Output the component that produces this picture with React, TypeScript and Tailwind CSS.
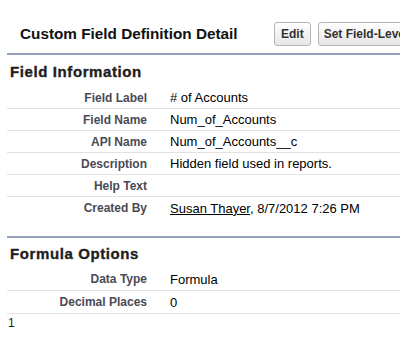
import React from "react";

const rows1: { label: string; value: React.ReactNode; last?: boolean }[] = [
  { label: "Field Label", value: "# of Accounts" },
  { label: "Field Name", value: "Num_of_Accounts" },
  { label: "API Name", value: "Num_of_Accounts__c" },
  { label: "Description", value: "Hidden field used in reports." },
  { label: "Help Text", value: "" },
  {
    label: "Created By",
    value: (
      <>
        <span className="underline">Susan Thayer</span>, 8/7/2012 7:26 PM
      </>
    ),
    last: true,
  },
];

const rows2 = [
  { label: "Data Type", value: "Formula" },
  { label: "Decimal Places", value: "0" },
];

function Row({ label, value, last, tall }: { label: string; value: React.ReactNode; last?: boolean; tall?: boolean }) {
  return (
    <div
      className={
        "grid grid-cols-[140px_1fr] items-center " +
        (tall ? "h-[23px] " : "h-[22px] ") +
        (last ? "" : "border-b border-[#e2e2e2]")
      }
    >
      <div className="text-right text-[12px] font-bold text-[#4a4a56] leading-none">{label}</div>
      <div className="pl-[23px] text-[13px] text-black leading-none whitespace-nowrap">{value}</div>
    </div>
  );
}

function SectionHeading({ children, h }: { children: React.ReactNode; h: string }) {
  return (
    <div className={"flex items-center pl-[3px] " + h}>
      <span className="text-[15px] font-bold tracking-[0.6px] text-[#1e1e1e] [-webkit-text-stroke:0.35px_#1e1e1e] leading-none">
        {children}
      </span>
    </div>
  );
}

export default function App() {
  return (
    <div
      className="w-[400px] h-[344px] overflow-hidden bg-white"
      style={{ fontFamily: '"Liberation Sans", Arial, sans-serif' }}
    >
      <div className="flex items-center h-[53px] pl-[20px] pt-[15px]">
        <div className="w-[254px] shrink-0 text-[15.3px] font-bold text-[#111] whitespace-nowrap">
          Custom Field Definition Detail
        </div>
        <div className="flex gap-[7px] shrink-0">
          <button className="h-[24px] px-[6px] border border-[#b5b5b5] rounded-[3px] bg-gradient-to-b from-white to-[#e6e6e6] text-[12px] font-bold text-[#333] leading-none shrink-0">
            Edit
          </button>
          <button className="h-[24px] px-[5px] border border-[#b5b5b5] rounded-[3px] bg-gradient-to-b from-white to-[#e6e6e6] text-[12px] font-bold text-[#333] leading-none whitespace-nowrap shrink-0">
            Set Field-Level Security
          </button>
        </div>
      </div>
      <div className="ml-[7px]">
        <div className="h-[2px] bg-[#97a2bd]" />
        <SectionHeading h="h-[32px]">Field Information</SectionHeading>
        {rows1.map((r) => (
          <Row key={r.label} {...r} />
        ))}
        <div className="h-[17px]" />
        <div className="h-[2px] bg-[#97a2bd]" />
        <SectionHeading h="h-[30px]">Formula Options</SectionHeading>
        {rows2.map((r) => (
          <Row key={r.label} {...r} tall />
        ))}
      </div>
      <div className="pl-[8px] pt-[1px] text-[12px] text-[#222] leading-[16px]">1</div>
    </div>
  );
}
